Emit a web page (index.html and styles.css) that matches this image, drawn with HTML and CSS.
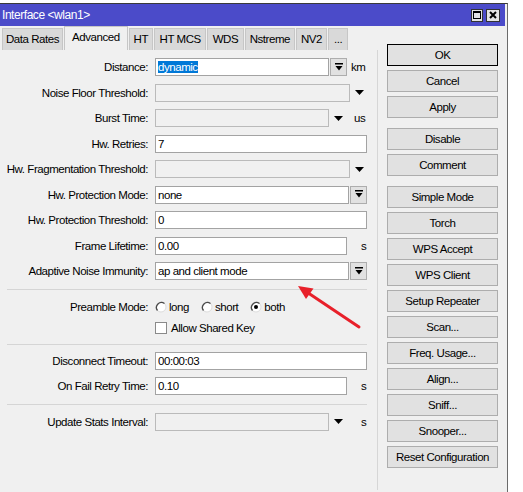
FILE: index.html
```html
<!DOCTYPE html>
<html>
<head>
<meta charset="utf-8">
<link rel="stylesheet" href="styles.css">
</head>
<body>
<div class="window">
  <div class="titlebar">
    <span class="title">Interface &lt;wlan1&gt;</span>
    <div class="tbtns">
      <span class="tbtn max"><svg width="8" height="8" viewBox="0 0 8 8"><rect x="0.5" y="0.5" width="7" height="7" fill="none" stroke="#000" stroke-width="1"/><rect x="0" y="0" width="8" height="2" fill="#000"/></svg></span>
      <span class="tbtn close"><svg width="8" height="8" viewBox="0 0 8 8"><path d="M1 1L7 7M7 1L1 7" stroke="#000" stroke-width="2"/></svg></span>
    </div>
  </div>
  <div class="main">
    <div class="left">
      <div class="tabs">
        <div class="tab first">Data Rates</div>
        <div class="tab active">Advanced</div>
        <div class="tab">HT</div>
        <div class="tab wide">HT MCS</div>
        <div class="tab wide">WDS</div>
        <div class="tab">Nstreme</div>
        <div class="tab">NV2</div>
        <div class="tab dots">...</div>
      </div>
      <div class="panel">
        <div class="rows">
          <div class="row">
            <span class="lbl">Distance:</span>
            <div class="fld w174"><span class="sel">dynamic</span></div>
            <div class="ddbtn"><svg width="8" height="9" viewBox="0 0 8 9"><rect x="0" y="0" width="8" height="1.5" fill="#000"/><path d="M0.5 3H7.5L4 7.5Z" fill="#000"/></svg></div>
            <span class="unit u4">km</span>
          </div>
          <div class="row">
            <span class="lbl">Noise Floor Threshold:</span>
            <div class="fld off w195"></div>
            <span class="arr"><svg width="9" height="5" viewBox="0 0 9 5"><path d="M0 0H9L4.5 5Z" fill="#000"/></svg></span>
          </div>
          <div class="row">
            <span class="lbl">Burst Time:</span>
            <div class="fld off w174"></div>
            <span class="arr"><svg width="9" height="5" viewBox="0 0 9 5"><path d="M0 0H9L4.5 5Z" fill="#000"/></svg></span>
            <span class="unit u11">us</span>
          </div>
          <div class="row">
            <span class="lbl">Hw. Retries:</span>
            <div class="fld w212">7</div>
          </div>
          <div class="row">
            <span class="lbl">Hw. Fragmentation Threshold:</span>
            <div class="fld off w195"></div>
            <span class="arr"><svg width="9" height="5" viewBox="0 0 9 5"><path d="M0 0H9L4.5 5Z" fill="#000"/></svg></span>
          </div>
          <div class="row">
            <span class="lbl">Hw. Protection Mode:</span>
            <div class="fld w194">none</div>
            <div class="ddbtn"><svg width="8" height="9" viewBox="0 0 8 9"><rect x="0" y="0" width="8" height="1.5" fill="#000"/><path d="M0.5 3H7.5L4 7.5Z" fill="#000"/></svg></div>
          </div>
          <div class="row">
            <span class="lbl">Hw. Protection Threshold:</span>
            <div class="fld w212">0</div>
          </div>
          <div class="row">
            <span class="lbl">Frame Lifetime:</span>
            <div class="fld w192">0.00</div>
            <span class="unit u14">s</span>
          </div>
          <div class="row">
            <span class="lbl">Adaptive Noise Immunity:</span>
            <div class="fld w194">ap and client mode</div>
            <div class="ddbtn"><svg width="8" height="9" viewBox="0 0 8 9"><rect x="0" y="0" width="8" height="1.5" fill="#000"/><path d="M0.5 3H7.5L4 7.5Z" fill="#000"/></svg></div>
          </div>
        </div>
        <div class="sep s1"></div>
        <div class="row preamble">
          <span class="lbl">Preamble Mode:</span>
          <span class="radio"><svg width="12" height="12" viewBox="0 0 12 12"><circle cx="6" cy="6" r="5" fill="#fff" stroke="#dcdcdc"/><path d="M2.5 9.5A5 5 0 0 1 9.5 2.5" fill="none" stroke="#4a4a4a" stroke-width="1.3"/></svg>long</span>
          <span class="radio"><svg width="12" height="12" viewBox="0 0 12 12"><circle cx="6" cy="6" r="5" fill="#fff" stroke="#dcdcdc"/><path d="M2.5 9.5A5 5 0 0 1 9.5 2.5" fill="none" stroke="#4a4a4a" stroke-width="1.3"/></svg>short</span>
          <span class="radio"><svg width="12" height="12" viewBox="0 0 12 12"><circle cx="6" cy="6" r="5" fill="#fff" stroke="#dcdcdc"/><path d="M2.5 9.5A5 5 0 0 1 9.5 2.5" fill="none" stroke="#4a4a4a" stroke-width="1.3"/><circle cx="6" cy="6" r="2" fill="#000"/></svg>both</span>
        </div>
        <div class="row allow">
          <span class="check"></span>
          <span class="checktext">Allow Shared Key</span>
        </div>
        <div class="sep s2"></div>
        <div class="row r-disc">
          <span class="lbl">Disconnect Timeout:</span>
          <div class="fld w212">00:00:03</div>
        </div>
        <div class="row r-fail">
          <span class="lbl">On Fail Retry Time:</span>
          <div class="fld w192">0.10</div>
          <span class="unit u14">s</span>
        </div>
        <div class="sep s3"></div>
        <div class="row r-upd">
          <span class="lbl">Update Stats Interval:</span>
          <div class="fld off w174"></div>
          <span class="arr"><svg width="9" height="5" viewBox="0 0 9 5"><path d="M0 0H9L4.5 5Z" fill="#000"/></svg></span>
          <span class="unit u18">s</span>
        </div>
      </div>
    </div>
    <div class="btns">
      <div class="btn def">OK</div>
      <div class="btn">Cancel</div>
      <div class="btn">Apply</div>
      <div class="btn gap">Disable</div>
      <div class="btn">Comment</div>
      <div class="btn gap">Simple Mode</div>
      <div class="btn">Torch</div>
      <div class="btn">WPS Accept</div>
      <div class="btn">WPS Client</div>
      <div class="btn">Setup Repeater</div>
      <div class="btn">Scan...</div>
      <div class="btn">Freq. Usage...</div>
      <div class="btn">Align...</div>
      <div class="btn">Sniff...</div>
      <div class="btn">Snooper...</div>
      <div class="btn">Reset Configuration</div>
    </div>
  </div>
</div>
<svg class="redarrow" width="523" height="492" viewBox="0 0 523 492">
  <line x1="359" y1="327" x2="309" y2="293.5" stroke="#e8202a" stroke-width="3" stroke-linecap="round"/>
  <path d="M298 286L313.5 288.5L306 299Z" fill="#e8202a"/>
</svg>
</body>
</html>
```

FILE: styles.css
```css
* { box-sizing: border-box; }

body {
  margin: 0;
  background: #ffffff;
  font-family: "Liberation Sans", Arial, sans-serif;
  font-size: 11.5px;
  letter-spacing: -0.45px;
  color: #000;
}

.window {
  margin-top: 3px;
  width: 508px;
  height: 489px;
  border-top: 1px solid #3a3a3a;
  border-right: 1px solid #6b6b6b;
  padding-right: 2px;
  background: #f0f0f0;
  overflow: hidden;
}

.titlebar {
  height: 22px;
  background: #4b4bc9;
  color: #fff;
  display: flex;
  align-items: center;
  padding-left: 2px;
}

.title { flex: 1; font-size: 12px; letter-spacing: -0.45px; }

.tbtns {
  display: flex;
  gap: 3px;
  margin-right: 5px;
}

.tbtn {
  height: 13px;
  border: 1px solid #333;
  background: #e4e4e4;
  display: flex;
  align-items: center;
  justify-content: center;
}

.tbtn.max { width: 12px; }
.tbtn.close { width: 14px; }

.main { display: flex; }

.left { width: 378px; }

.tabs {
  height: 24px;
  display: flex;
  align-items: flex-end;
  padding-left: 2px;
}

.tab {
  height: 22px;
  line-height: 21px;
  padding: 0 4px;
  border: 1px solid #c6c6c6;
  border-bottom: none;
  background: #d9d9d9;
  margin-right: 1px;
  white-space: nowrap;
}

.tab.first { padding: 0 3px; }
.tab.wide { padding: 0 4.5px; }
.tab.dots { padding: 0 5px; }

.tab.active {
  height: 24px;
  line-height: 21px;
  padding: 0 7px;
  background: #f0f0f0;
}

.panel {
  height: 440px;
  border-right: 1px solid #d6d6d6;
  padding-top: 8px;
}

.rows {
  display: flex;
  flex-direction: column;
  gap: 7.5px;
}

.row {
  display: flex;
  align-items: center;
  height: 18px;
}

.lbl {
  width: 148px;
  margin-right: 7px;
  text-align: right;
  white-space: nowrap;
}

.fld {
  height: 18px;
  border: 1px solid #a3a3a3;
  background: #fff;
  padding-left: 2px;
  line-height: 16px;
  white-space: nowrap;
  overflow: hidden;
}

.fld.off {
  background: #f0f0f0;
  border-color: #bababa;
}

.w174 { width: 174px; }
.w192 { width: 192px; }
.w194 { width: 194px; }
.w195 { width: 195px; }
.w212 { width: 212px; }

.sel {
  background: #0078d7;
  color: #fff;
}

.ddbtn {
  width: 17px;
  height: 18px;
  margin-left: 1px;
  border: 1px solid #adadad;
  background: #e1e1e1;
  display: flex;
  align-items: center;
  justify-content: center;
}

.arr {
  display: flex;
  margin-left: 5px;
}

.u4 { margin-left: 4px; }
.u11 { margin-left: 11px; }
.u14 { margin-left: 14px; }
.u18 { margin-left: 18px; }

.sep {
  height: 1px;
  background: #d5d5d5;
  margin-left: 7px;
  margin-right: 10px;
}

.s1 { margin-top: 8.5px; }
.preamble { margin-top: 8px; }

.radio {
  display: flex;
  align-items: center;
  gap: 2px;
  margin-right: 12px;
}

.allow {
  margin-top: 3px;
  padding-left: 155px;
}

.check {
  width: 12px;
  height: 12px;
  border: 1px solid #8a8a8a;
  background: #fff;
}

.checktext { margin-left: 4px; }

.s2 { margin-top: 7px; }
.r-disc { margin-top: 7px; }
.r-fail { margin-top: 7px; }
.s3 { margin-top: 9px; }
.r-upd { margin-top: 8px; }

.btns {
  width: 111px;
  margin-left: 9px;
  padding-top: 18px;
  display: flex;
  flex-direction: column;
  gap: 4px;
}

.btn {
  height: 22px;
  border: 1px solid #adadad;
  background: #e1e1e1;
  text-align: center;
  line-height: 20px;
  white-space: nowrap;
}

.btn.def { border-color: #000; }
.btn.gap { margin-top: 6px; }

.redarrow {
  position: absolute;
  left: 0;
  top: 0;
  pointer-events: none;
}
```
